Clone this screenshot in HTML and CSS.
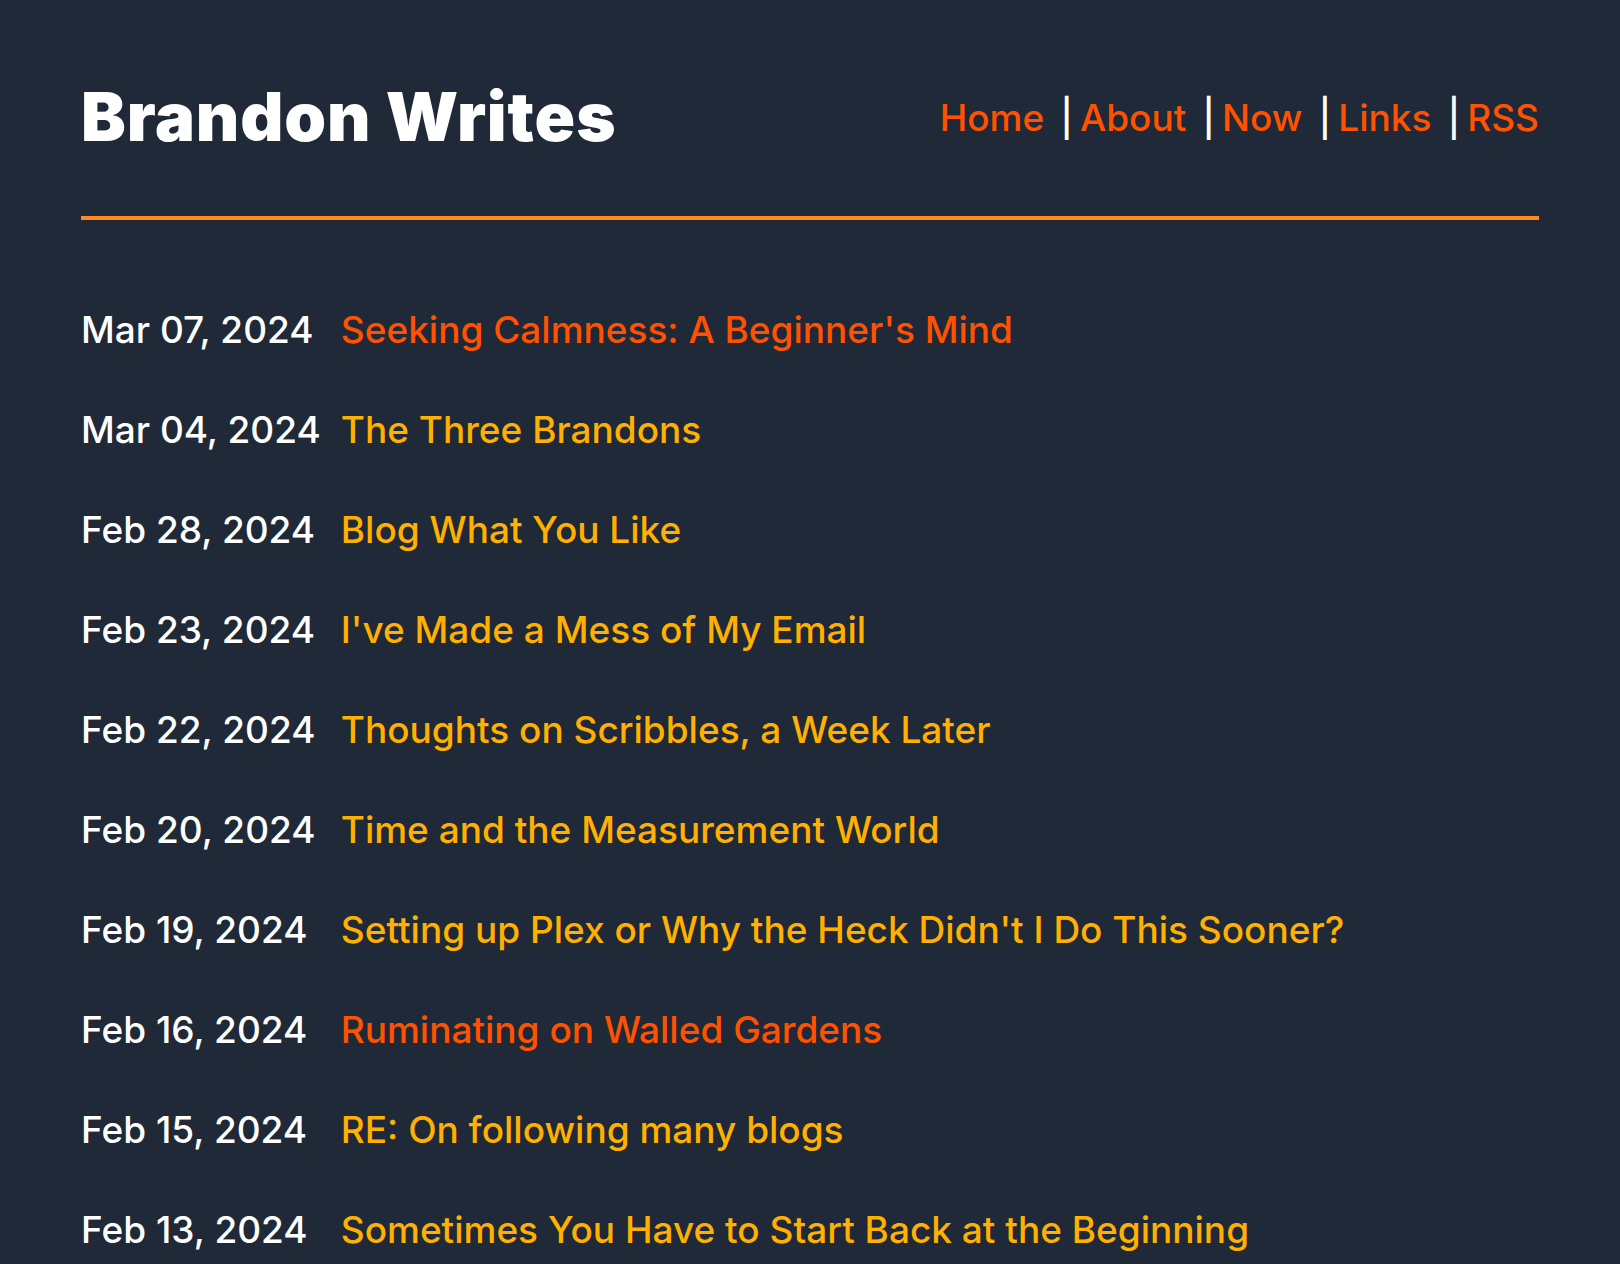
FILE: index.html
```html
<!DOCTYPE html>
<html lang="en">
<head>
<meta charset="utf-8">
<title>Brandon Writes</title>
<link rel="stylesheet" href="styles.css">
</head>
<body>
<div class="page">
  <header class="site-header">
    <h1 class="site-title">Brandon Writes</h1>
    <nav class="site-nav">
      <a class="nav-link" href="#">Home</a><span class="sep">|</span>
      <a class="nav-link" href="#">About</a><span class="sep">|</span>
      <a class="nav-link" href="#">Now</a><span class="sep">|</span>
      <a class="nav-link" href="#">Links</a><span class="sep">|</span>
      <a class="nav-link last" href="#">RSS</a>
    </nav>
  </header>
  <main class="post-list">
    <span class="post-date">Mar 07, 2024</span><a class="post-title new" href="#">Seeking Calmness: A Beginner's Mind</a>
    <span class="post-date">Mar 04, 2024</span><a class="post-title" href="#">The Three Brandons</a>
    <span class="post-date">Feb 28, 2024</span><a class="post-title" href="#">Blog What You Like</a>
    <span class="post-date">Feb 23, 2024</span><a class="post-title" href="#">I've Made a Mess of My Email</a>
    <span class="post-date">Feb 22, 2024</span><a class="post-title" href="#">Thoughts on Scribbles, a Week Later</a>
    <span class="post-date">Feb 20, 2024</span><a class="post-title" href="#">Time and the Measurement World</a>
    <span class="post-date">Feb 19, 2024</span><a class="post-title" href="#">Setting up Plex or Why the Heck Didn't I Do This Sooner?</a>
    <span class="post-date">Feb 16, 2024</span><a class="post-title new" href="#">Ruminating on Walled Gardens</a>
    <span class="post-date">Feb 15, 2024</span><a class="post-title" href="#">RE: On following many blogs</a>
    <span class="post-date">Feb 13, 2024</span><a class="post-title" href="#">Sometimes You Have to Start Back at the Beginning</a>
  </main>
</div>
</body>
</html>
```

FILE: styles.css
```css
html, body {
  margin: 0;
  padding: 0;
  background: #1f2937;
}

body {
  font-family: Inter, "Noto Sans", sans-serif;
  color: #ffffff;
}

.page {
  padding: 0 81px;
}

.site-header {
  display: flex;
  align-items: center;
  justify-content: space-between;
  padding-top: 77px;
  padding-bottom: 59px;
  border-bottom: 4px solid #ff8a1f;
}

.site-title {
  margin: 0;
  font-size: 67px;
  font-weight: 900;
  line-height: 80px;
  letter-spacing: 0.9px;
  color: #ffffff;
}

.site-nav {
  display: flex;
  align-items: baseline;
  font-size: 37px;
  font-weight: 500;
}

.nav-link {
  color: #ff5200;
  text-decoration: none;
  margin-right: 16px;
}

.nav-link.last {
  margin-right: 0;
}

.sep {
  color: #ffffff;
  margin-right: 7px;
}

.post-list {
  display: grid;
  grid-template-columns: max-content 1fr;
  column-gap: 20px;
  margin-top: 60px;
  font-size: 37px;
  font-weight: 500;
  line-height: 100px;
}

.post-date {
  color: #ffffff;
  white-space: nowrap;
}

.post-title {
  color: #ffb000;
  text-decoration: none;
}

.post-title.new {
  color: #ff5200;
}
```
